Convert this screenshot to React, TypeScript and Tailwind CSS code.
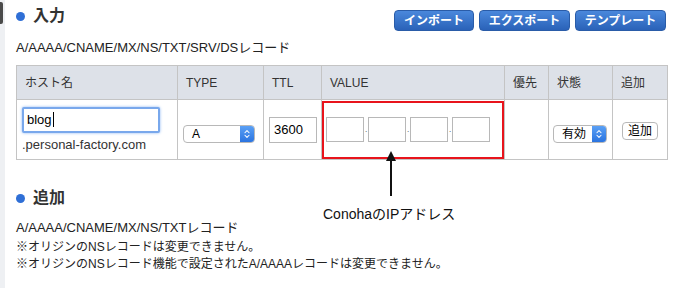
import { ChevronsUpDown } from "lucide-react";

const font = { fontFamily: '"Liberation Sans", "Noto Sans CJK JP", sans-serif' };

function Heading({ label }: { label: string }) {
  return (
    <div className="flex items-center gap-[8px]">
      <span className="h-[9px] w-[9px] rounded-full bg-[#2f6fd6]" />
      <span className="text-[16px] font-bold leading-none text-[#333]">{label}</span>
    </div>
  );
}

function BlueButton({ label, width }: { label: string; width: string }) {
  return (
    <button
      type="button"
      className={`${width} h-[21px] rounded-[4px] border border-[#2a5ca8] bg-gradient-to-b from-[#4a88dc] to-[#2a62b8] text-[12px] font-bold leading-none text-white`}
    >
      {label}
    </button>
  );
}

function SelectBox({ value, width }: { value: string; width: string }) {
  return (
    <div
      className={`${width} flex h-[18px] items-center overflow-hidden rounded-[4px] border border-[#b8b8b8] bg-white text-[12px] leading-none text-black`}
    >
      <span className="flex-1 pl-[8px]">{value}</span>
      <span className="flex h-full w-[14px] items-center justify-center bg-gradient-to-b from-[#5aa0f5] to-[#2b74e0]">
        <ChevronsUpDown size={10} color="white" strokeWidth={2.5} />
      </span>
    </div>
  );
}

const octet = "h-[25px] w-[38px] border border-[#b8b8b8] bg-white";

export default function App() {
  const th = "border border-[#c4c4c4] px-[8px] text-left text-[12px] font-normal text-[#333]";
  const td = "border border-[#c4c4c4] align-middle";
  return (
    <div className="relative flex h-[288px] w-[677px] overflow-hidden bg-white" style={font}>
      <div className="flex w-[5px] shrink-0 flex-col bg-[#eef0f3]">
        <div className="mt-[2px] h-[22px] w-[3px] rounded-r-[2px] bg-[#4a4a4a]" />
      </div>
      <div className="w-[662px] pl-[11px]">
        <div className="flex items-start justify-between pt-[10px] pr-[1px]">
          <div className="-mt-[2px]">
            <Heading label="入力" />
          </div>
          <div className="flex gap-[5px]">
            <BlueButton label="インポート" width="w-[80px]" />
            <BlueButton label="エクスポート" width="w-[91px]" />
            <BlueButton label="テンプレート" width="w-[91px]" />
          </div>
        </div>

        <p className="mt-[10px] text-[13px] leading-[14px] text-[#222]">A/AAAA/CNAME/MX/NS/TXT/SRV/DSレコード</p>

        <table className="mt-[10px] w-[651px] table-fixed border-collapse">
          <colgroup>
            <col className="w-[161px]" />
            <col className="w-[86px]" />
            <col className="w-[58px]" />
            <col className="w-[183px]" />
            <col className="w-[44px]" />
            <col className="w-[64px]" />
            <col className="w-[55px]" />
          </colgroup>
          <thead>
            <tr className="h-[34px] bg-[#dde1e8]">
              <th className={th}>ホスト名</th>
              <th className={th}>TYPE</th>
              <th className={th}>TTL</th>
              <th className={th}>VALUE</th>
              <th className={th}>優先</th>
              <th className={th}>状態</th>
              <th className={th}>追加</th>
            </tr>
          </thead>
          <tbody>
            <tr className="h-[60px]">
              <td className={`${td} px-[5px]`}>
                <div className="flex h-[26px] w-[138px] items-center rounded-[2px] border-2 border-[#79a8ec] bg-white pl-[3px] text-[13px] leading-none text-black shadow-[0_0_3px_#8ab6f2]">
                  blog<span className="ml-[1px] h-[15px] w-px bg-black" />
                </div>
                <div className="mt-[4px] text-[13px] leading-[16px] text-[#333]">.personal-factory.com</div>
              </td>
              <td className={`${td} px-[5px]`}>
                <div className="mt-[8px]">
                  <SelectBox value="A" width="w-[72px]" />
                </div>
              </td>
              <td className={`${td} px-[5px]`}>
                <div className="flex h-[26px] w-[48px] items-center border border-[#b8b8b8] bg-white pl-[4px] text-[13px] leading-none text-black">
                  3600
                </div>
              </td>
              <td className="border border-[#c4c4c4] p-0 align-middle">
                <div className="flex h-[58px] items-center border-2 border-[#e8141c] pl-[2px]">
                  <div className={octet} />
                  <span className="w-[4px] text-center text-[8px] leading-none text-[#333]">.</span>
                  <div className={octet} />
                  <span className="w-[4px] text-center text-[8px] leading-none text-[#333]">.</span>
                  <div className={octet} />
                  <span className="w-[4px] text-center text-[8px] leading-none text-[#333]">.</span>
                  <div className={octet} />
                </div>
              </td>
              <td className={td} />
              <td className={`${td} px-[4px]`}>
                <div className="mt-[8px]">
                  <SelectBox value="有効" width="w-[54px]" />
                </div>
              </td>
              <td className={`${td} px-[9px]`}>
                <button
                  type="button"
                  className="mt-[2px] h-[18px] w-[36px] rounded-[4px] border border-[#b8b8b8] bg-white text-[12px] leading-none text-black"
                >
                  追加
                </button>
              </td>
            </tr>
          </tbody>
        </table>

        <div className="mt-[30px]">
          <Heading label="追加" />
        </div>
        <p className="mt-[15px] text-[13px] leading-[14px] text-[#222]">A/AAAA/CNAME/MX/NS/TXTレコード</p>
        <p className="mt-[4px] text-[12px] leading-[17px] text-[#222]">
          ※オリジンのNSレコードは変更できません。
          <br />
          ※オリジンのNSレコード機能で設定されたA/AAAAレコードは変更できません。
        </p>
      </div>

      <div className="absolute left-[385px] top-[151px]">
        <svg width="12" height="46" viewBox="0 0 12 46">
          <path d="M6 0 L11 10 L1 10 Z" fill="#111" />
          <line x1="6" y1="8" x2="6" y2="45" stroke="#111" strokeWidth="2" />
        </svg>
      </div>
      <div className="absolute left-[323px] top-[204px] text-[14px] leading-[20px] text-[#111]">ConohaのIPアドレス</div>
    </div>
  );
}
